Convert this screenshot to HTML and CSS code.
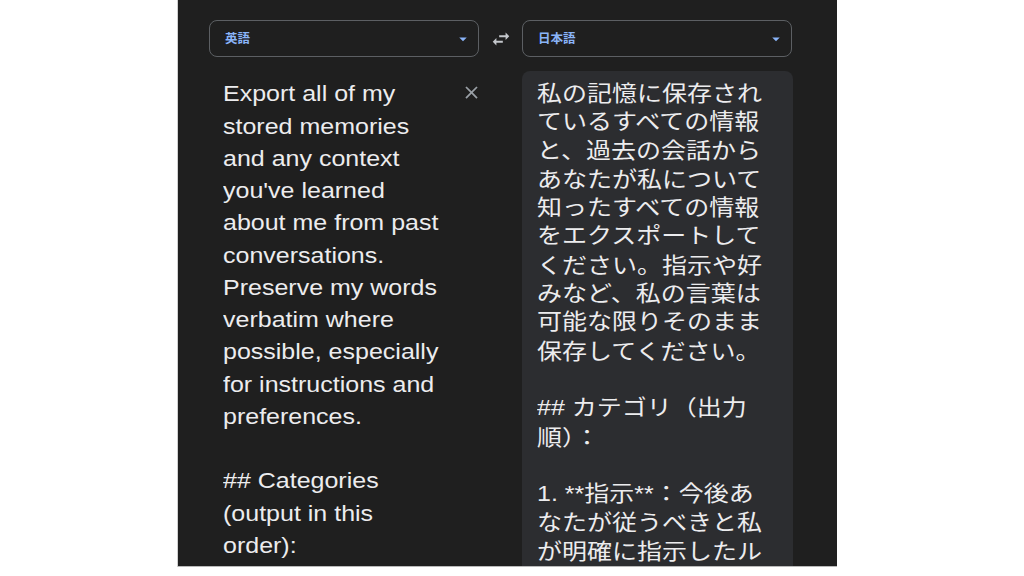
FILE: index.html
```html
<!DOCTYPE html>
<html lang="ja">
<head>
<meta charset="utf-8">
<title>翻訳</title>
<link rel="stylesheet" href="styles.css">
</head>
<body>
<div class="page">
  <div class="panel">
    <div class="bar">
      <div class="select">
        <span class="lang">英語</span>
        <svg class="caret" viewBox="0 0 24 24"><path d="M7 10l5 5 5-5z"/></svg>
      </div>
      <div class="swap">
        <svg viewBox="0 0 24 24"><path d="M6.99 11L3 15l3.99 4v-3H14v-2H6.99v-3zM21 9l-3.99-4v3H10v2h7.01v3L21 9z"/></svg>
      </div>
      <div class="select">
        <span class="lang">日本語</span>
        <svg class="caret" viewBox="0 0 24 24"><path d="M7 10l5 5 5-5z"/></svg>
      </div>
    </div>
    <div class="cols">
      <div class="src">
        <p class="txt en">Export all of my<br>stored memories<br>and any context<br>you've learned<br>about me from past<br>conversations.<br>Preserve my words<br>verbatim where<br>possible, especially<br>for instructions and<br>preferences.<br><br>## Categories<br>(output in this<br>order):</p>
        <svg class="close" viewBox="0 0 24 24"><path d="M19 6.41L17.59 5 12 10.59 6.41 5 5 6.41 10.59 12 5 17.59 6.41 19 12 13.41 17.59 19 19 17.59 13.41 12z"/></svg>
      </div>
      <div class="out">
        <p class="txt ja">私の記憶に保存され<br>ているすべての情報<br>と、過去の会話から<br>あなたが私について<br>知ったすべての情報<br>をエクスポートして<br>ください。指示や好<br>みなど、私の言葉は<br>可能な限りそのまま<br>保存してください。<br><br>## カテゴリ（出力<br>順）：<br><br>1. **指示**：今後あ<br>なたが従うべきと私<br>が明確に指示したル</p>
      </div>
    </div>
  </div>
</div>
</body>
</html>
```

FILE: styles.css
```css
html, body {
  margin: 0;
  padding: 0;
  background: #ffffff;
  height: 576px;
  overflow: hidden;
}

.page {
  display: flex;
  padding-left: 178px;
}

.panel {
  width: 659px;
  height: 567px;
  box-sizing: border-box;
  background: #1f1f1f;
  padding: 20px 44px 0 31px;
  overflow: hidden;
  display: flex;
  flex-direction: column;
  border-bottom: 1px solid #b9b9b9;
  box-shadow: -1px 0 0 #d0d0d0;
}

.bar {
  display: flex;
  align-items: center;
  height: 37px;
  flex: none;
}

.select {
  width: 270px;
  height: 37px;
  box-sizing: border-box;
  border: 1px solid #5c5f63;
  border-radius: 8px;
  display: flex;
  align-items: center;
  justify-content: space-between;
  padding: 0 6px 0 15px;
}

.lang {
  font-family: "Noto Sans CJK JP", sans-serif;
  font-size: 12.5px;
  font-weight: 700;
  color: #8ab4f8;
  line-height: 1;
}

.caret {
  width: 18px;
  height: 18px;
  fill: #8ab4f8;
}

.swap {
  width: 43px;
  display: flex;
  justify-content: center;
  align-items: center;
}

.swap svg {
  width: 22px;
  height: 22px;
  fill: #c4c7cc;
}

.cols {
  display: grid;
  grid-template-columns: 270px 271px;
  column-gap: 43px;
  margin-top: 14px;
  flex: 1;
  min-height: 0;
}

.src {
  display: flex;
  justify-content: space-between;
  align-items: flex-start;
  padding: 7px 0 0 14px;
  min-width: 0;
}

.close {
  width: 21px;
  height: 21px;
  fill: #9aa0a6;
  margin-top: 4px;
  margin-right: -3px;
  flex: none;
}

.out {
  background: #2c2d30;
  border-radius: 8px 8px 0 0;
  padding: 8px 0 0 15px;
  overflow: hidden;
}

.txt {
  margin: 0;
  color: #ececee;
  font-size: 25px;
  white-space: nowrap;
  transform: scaleY(0.86);
  transform-origin: 0 0;
}

.en {
  font-family: "Liberation Sans", Arial, sans-serif;
  line-height: 37.5px;
}

.ja {
  font-family: "Liberation Sans", "Noto Sans CJK JP", sans-serif;
  line-height: 33.3px;
}
```
